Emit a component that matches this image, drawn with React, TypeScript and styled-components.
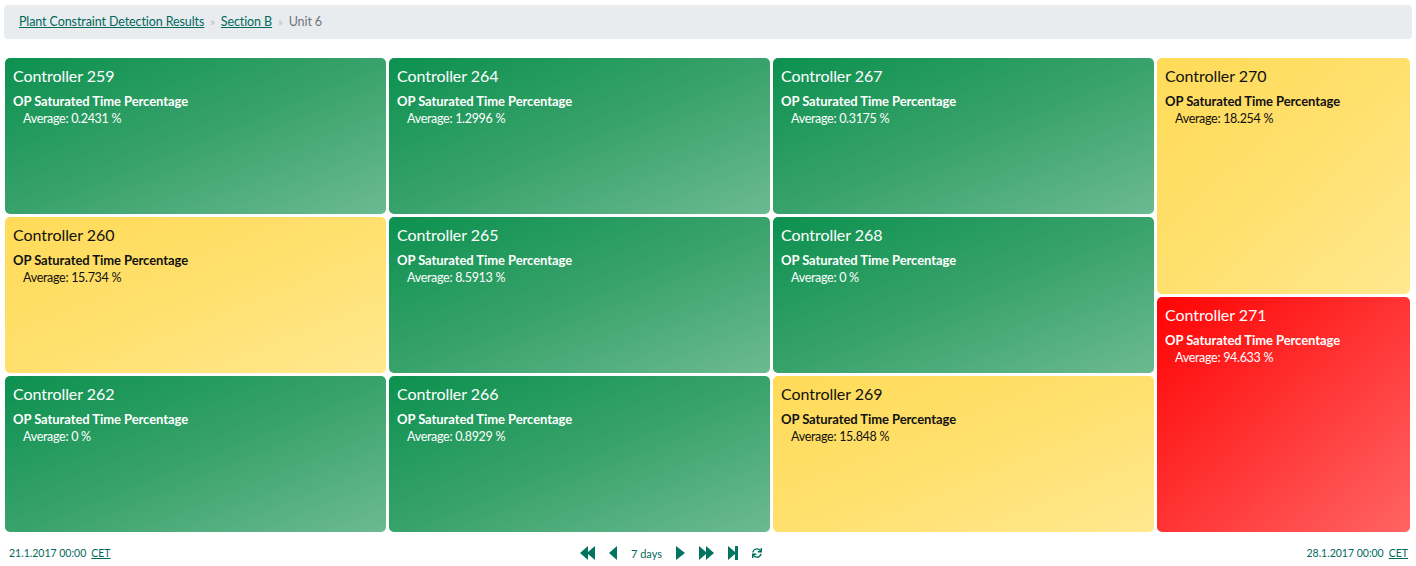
import styled, { createGlobalStyle } from "styled-components";
import { FaSync } from "react-icons/fa";

const GlobalStyle = createGlobalStyle`
  html, body {
    margin: 0;
    padding: 0;
    background: #fff;
    font-family: "Lato", "Noto Sans", sans-serif;
  }
`;

const Page = styled.div`
  width: 1416px;
  height: 566px;
  overflow: hidden;
  box-sizing: border-box;
  padding: 5px 4px 0 5px;
`;

const Breadcrumb = styled.nav`
  display: flex;
  align-items: center;
  box-sizing: border-box;
  height: 34px;
  margin-left: -1px;
  padding: 0 0 1px 15px;
  border-radius: 4px;
  background: #e9ecef;
  font-size: 12.5px;
  letter-spacing: -0.1px;
  color: #6c757d;
`;

const Crumb = styled.a`
  color: #00695c;
  text-decoration: underline;
`;

const Sep = styled.span`
  margin: 0 6px;
  color: #b9bfc5;
  font-size: 11px;
`;

const Grid = styled.div`
  display: grid;
  grid-template-columns: 381px 381px 381px 253px;
  column-gap: 3px;
  height: 474px;
  margin-top: 19px;
`;

const Column = styled.div`
  display: flex;
  flex-direction: column;
  gap: 3px;
`;

type Level = "green" | "yellow" | "red";

const backgrounds: Record<Level, string> = {
  green: "linear-gradient(to bottom right, #0c914f, #38a26b 50%, #6cba91)",
  yellow: "linear-gradient(to bottom right, #ffdb58, #ffe06e 50%, #ffe88f)",
  red: "linear-gradient(to bottom right, #ff0303, #ff6464)",
};

const Card = styled.div<{ $level: Level }>`
  flex: 1 1 0;
  box-sizing: border-box;
  padding: 8px;
  border-radius: 5px;
  background: ${(props) => backgrounds[props.$level]};
  color: ${(props) => (props.$level === "yellow" ? "#111" : "#fff")};
`;

const Title = styled.div`
  font-size: 16px;
  line-height: 20px;
  letter-spacing: -0.05px;
`;

const Metric = styled.div`
  margin-top: 7px;
  font-size: 13px;
  line-height: 17px;
  font-weight: 700;
  letter-spacing: -0.07px;
`;

const Average = styled.div`
  padding-left: 10px;
  font-size: 12.5px;
  line-height: 18px;
  letter-spacing: -0.3px;
`;

const Footer = styled.div`
  display: grid;
  grid-template-columns: 1fr auto 1fr;
  align-items: center;
  height: 22px;
  margin-top: 10px;
  padding: 0 4px;
  font-size: 10.5px;
  color: #00695c;
`;

const Stamp = styled.div<{ $right?: boolean }>`
  display: flex;
  gap: 5px;
  justify-content: ${(props) => (props.$right ? "flex-end" : "flex-start")};
`;

const Zone = styled.a`
  text-decoration: underline;
`;

const Pager = styled.div`
  display: flex;
  align-items: center;
  gap: 14px;
  padding-right: 75px;
  font-size: 11px;
`;

const Glyph = styled.svg`
  display: block;
  height: 14px;
  fill: #00745f;
`;

const Refresh = styled(FaSync)`
  display: block;
  width: 10px;
  height: 10px;
  color: #00745f;
`;

const icons = {
  first: { w: 15, d: "M15 0v14L8 8v6L0 7l8-7v6z" },
  prev: { w: 8, d: "M8 0v14L0 7z" },
  next: { w: 9, d: "M0 0v14l9-7z" },
  fast: { w: 15, d: "M0 0v14l7-6v6l8-7-8-7v6z" },
  last: { w: 10, d: "M0 0v14l7-6v6h3V0H7v6z" },
};

const Icon = ({ name }: { name: keyof typeof icons }) => (
  <Glyph viewBox={`0 0 ${icons[name].w} 14`} width={icons[name].w}>
    <path d={icons[name].d} />
  </Glyph>
);

const columns: { name: string; avg: string; level: Level }[][] = [
  [
    { name: "Controller 259", avg: "0.2431", level: "green" },
    { name: "Controller 260", avg: "15.734", level: "yellow" },
    { name: "Controller 262", avg: "0", level: "green" },
  ],
  [
    { name: "Controller 264", avg: "1.2996", level: "green" },
    { name: "Controller 265", avg: "8.5913", level: "green" },
    { name: "Controller 266", avg: "0.8929", level: "green" },
  ],
  [
    { name: "Controller 267", avg: "0.3175", level: "green" },
    { name: "Controller 268", avg: "0", level: "green" },
    { name: "Controller 269", avg: "15.848", level: "yellow" },
  ],
  [
    { name: "Controller 270", avg: "18.254", level: "yellow" },
    { name: "Controller 271", avg: "94.633", level: "red" },
  ],
];

const App = () => {
  return (
    <Page>
      <GlobalStyle />
      <Breadcrumb>
        <Crumb>Plant Constraint Detection Results</Crumb>
        <Sep>»</Sep>
        <Crumb>Section B</Crumb>
        <Sep>»</Sep>
        <span>Unit 6</span>
      </Breadcrumb>
      <Grid>
        {columns.map((column, i) => (
          <Column key={i}>
            {column.map((card) => (
              <Card key={card.name} $level={card.level}>
                <Title>{card.name}</Title>
                <Metric>OP Saturated Time Percentage</Metric>
                <Average>Average: {card.avg} %</Average>
              </Card>
            ))}
          </Column>
        ))}
      </Grid>
      <Footer>
        <Stamp>
          <span>21.1.2017 00:00</span>
          <Zone>CET</Zone>
        </Stamp>
        <Pager>
          <Icon name="first" />
          <Icon name="prev" />
          <span>7 days</span>
          <Icon name="next" />
          <Icon name="fast" />
          <Icon name="last" />
          <Refresh />
        </Pager>
        <Stamp $right>
          <span>28.1.2017 00:00</span>
          <Zone>CET</Zone>
        </Stamp>
      </Footer>
    </Page>
  );
};

export default App;
